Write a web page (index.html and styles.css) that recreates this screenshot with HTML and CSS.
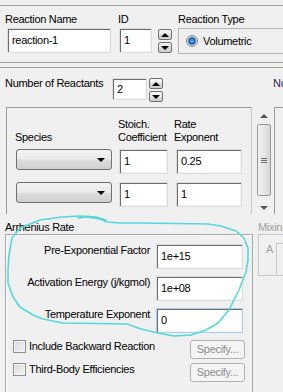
FILE: index.html
```html
<!DOCTYPE html>
<html lang="en">
<head>
    <meta charset="UTF-8">
    <title>Reaction</title>
    <link rel="stylesheet" href="styles.css">
</head>
<body>
    <div class="top-rule"></div>
    <div class="head-row">
        <div class="field name-field">
            <div class="label">Reaction Name</div>
            <div class="edit name-edit">reaction-1</div>
        </div>
        <div class="field id-field">
            <div class="label">ID</div>
            <div class="with-spin">
                <div class="edit id-edit">1</div>
                <div class="spin">
                    <div class="spin-btn up"></div>
                    <div class="spin-btn down"></div>
                </div>
            </div>
        </div>
        <div class="field type-field">
            <div class="label">Reaction Type</div>
            <div class="type-box"><span class="radio"></span>Volumetric</div>
        </div>
    </div>
    <div class="rule rule-a"></div>
    <div class="rule rule-b"></div>

    <div class="mid">
        <div class="reactants">
            <div class="count-row">
                <div class="label count-label">Number of Reactants</div>
                <div class="edit count-edit">2</div>
                <div class="spin small">
                    <div class="spin-btn up"></div>
                    <div class="spin-btn down"></div>
                </div>
            </div>
            <div class="table-wrap">
                <div class="table-box">
                    <div class="grid">
                        <div class="th species">Species</div>
                        <div class="th stoich">Stoich.<br>Coefficient</div>
                        <div class="th rate">Rate<br>Exponent</div>

                        <div class="combo"></div>
                        <div class="edit cell">1</div>
                        <div class="edit cell rate-cell">0.25</div>

                        <div class="combo"></div>
                        <div class="edit cell">1</div>
                        <div class="edit cell rate-cell">1</div>
                    </div>
                </div>
                <div class="vscroll">
                    <div class="arrow-up"></div>
                    <div class="thumb"><span></span><span></span><span></span></div>
                    <div class="arrow-down"></div>
                </div>
            </div>
        </div>
        <div class="products">
            <div class="label nu">Number of Products</div>
            <div class="products-box"></div>
        </div>
    </div>

    <div class="lower">
        <div class="arrhenius">
            <div class="label">Arrhenius Rate</div>
            <div class="group">
                <div class="param">
                    <div class="param-label">Pre-Exponential Factor</div>
                    <div class="edit param-edit">1e+15</div>
                </div>
                <div class="param">
                    <div class="param-label">Activation Energy (j/kgmol)</div>
                    <div class="edit param-edit">1e+08</div>
                </div>
                <div class="param">
                    <div class="param-label">Temperature Exponent</div>
                    <div class="edit param-edit focused">0</div>
                </div>
                <div class="check-row">
                    <span class="check"></span>
                    <span class="check-text">Include Backward Reaction</span>
                    <div class="btn-disabled">Specify...</div>
                </div>
                <div class="check-row">
                    <span class="check"></span>
                    <span class="check-text">Third-Body Efficiencies</span>
                    <div class="btn-disabled">Specify...</div>
                </div>
            </div>
        </div>
        <div class="mixing">
            <div class="label muted">Mixing Rule</div>
            <div class="mix-group">
                <span class="muted">A</span>
                <div class="mix-edit"></div>
            </div>
        </div>
    </div>

    <svg class="scribble" width="283" height="392" viewBox="0 0 283 392">
        <path d="M78 218 L87 217 L100 219 L107 222 L120 223 L142 223 L208 224 L221 226 L236 231 L244 238 L248 248 L248 260 L246 272 L239 290 L229 310 L218 323 L206 330 L191 335 L174 336 L158 333 L141 329 L127 324 L63 323 L43 319 L33 315 L20 307 L13 297 L8 283 L8 270 L9 255 L12 238 L20 228 L40 220 L62 217 L80 216 L96 217 L106 220"/>
    </svg>
</body>
</html>
```

FILE: styles.css
```css
* {
    box-sizing: border-box;
}
body {
    margin: 0;
    width: 283px;
    height: 392px;
    overflow: hidden;
    position: relative;
    background: #f0f0f0;
    font-family: "Liberation Sans", Arial, sans-serif;
    font-size: 11px;
    line-height: 13px;
    letter-spacing: -0.3px;
    color: #000;
}
.top-rule {
    height: 6px;
    border-bottom: 1px solid #a0a0a0;
}
.label {
    white-space: nowrap;
}
.muted {
    color: #a0a0a0;
}

/* text boxes */
.edit {
    height: 25px;
    background: #fff;
    border: 1px solid #dcdcdc;
    box-shadow: inset 1px 1px 0 #6d6d6d, inset -1px -1px 0 #f4f4f4;
    padding: 5px 0 0 4px;
    white-space: nowrap;
    overflow: hidden;
}
.edit.focused {
    border-color: #a9cfee;
}

/* header row */
.head-row {
    display: flex;
    padding: 7px 0 0 5px;
}
.field .label {
    margin-bottom: 2px;
}
.name-field {
    width: 106px;
}
.name-edit {
    margin-left: 2px;
    width: 104px;
}
.id-field {
    margin-left: 7px;
}
.with-spin {
    display: flex;
    align-items: flex-start;
}
.id-edit {
    margin-left: 1px;
    width: 33px;
}
.spin {
    margin: 1px 0 0 6px;
    display: flex;
    flex-direction: column;
    gap: 2px;
}
.spin-btn {
    width: 14px;
    height: 11px;
    border: 1px solid #707070;
    border-radius: 2px;
    background: linear-gradient(#f4f4f4, #ebebeb 50%, #dcdcdc 50%, #cfcfcf);
    display: flex;
    align-items: center;
    justify-content: center;
}
.spin-btn::before {
    content: "";
    border-left: 4px solid transparent;
    border-right: 4px solid transparent;
}
.spin-btn.up::before {
    border-bottom: 4px solid #000;
}
.spin-btn.down::before {
    border-top: 4px solid #000;
}
.type-field {
    margin-left: 6px;
}
.type-box {
    width: 120px;
    height: 26px;
    margin-top: 1px;
    border: 1px solid #b4b4b4;
    border-right: none;
    display: flex;
    align-items: center;
    padding-left: 7px;
    gap: 5px;
}
.radio {
    width: 12px;
    height: 12px;
    border-radius: 50%;
    border: 1px solid #8a8a8a;
    background: radial-gradient(circle, #4d9be0 0 1.5px, #0f4c94 3px, #8fb9e3 4px, #eaeaea 5px);
}

.rule {
    border-top: 1px solid #a0a0a0;
}
.rule-a {
    margin-top: 8px;
}
.rule-b {
    margin-top: 4px;
}

/* reactants */
.mid {
    display: flex;
}
.reactants {
    width: 272px;
    flex: none;
}
.count-row {
    display: flex;
    align-items: flex-start;
    padding: 10px 0 0 5px;
}
.count-label {
    width: 107px;
    margin-top: -1px;
}
.count-edit {
    width: 35px;
    height: 22px;
    padding-top: 4px;
}
.spin.small {
    margin: 0 0 0 2px;
}
.table-wrap {
    display: flex;
    margin-top: 5px;
    height: 107px;
}
.table-box {
    margin-left: 6px;
    width: 246px;
    border: 1px solid #9a9a9a;
    border-right-color: #c8c8c8;
    border-bottom: none;
    padding: 10px 0 0 9px;
}
.grid {
    display: grid;
    grid-template-columns: 103px 57px 66px;
    row-gap: 8px;
}
.th {
    align-self: end;
    margin-left: -1px;
    margin-bottom: -3px;
}
.th.rate {
    margin-left: -2px;
}
.combo {
    width: 96px;
    height: 21px;
    border: 1px solid #707070;
    border-radius: 3px;
    background: linear-gradient(#f3f3f3, #ebebeb 45%, #dddddd 55%, #cfcfcf);
    position: relative;
}
.combo::after {
    content: "";
    position: absolute;
    right: 6px;
    top: 8px;
    border-left: 4px solid transparent;
    border-right: 4px solid transparent;
    border-top: 4px solid #000;
}
.cell {
    width: 49px;
}
.rate-cell {
    width: 66px;
}
.vscroll {
    margin-left: 4px;
    width: 15px;
    display: flex;
    flex-direction: column;
    align-items: center;
    padding-top: 7px;
}
.arrow-up,
.arrow-down {
    border-left: 4px solid transparent;
    border-right: 4px solid transparent;
}
.arrow-up {
    border-bottom: 4px solid #555;
}
.arrow-down {
    border-top: 4px solid #555;
    margin-top: 10px;
}
.thumb {
    margin-top: 6px;
    width: 14px;
    height: 72px;
    border: 1px solid #9a9a9a;
    border-radius: 2px;
    background: linear-gradient(90deg, #f2f2f2, #e6e6e6 50%, #d6d6d6);
    display: flex;
    flex-direction: column;
    align-items: center;
    justify-content: center;
    gap: 1px;
}
.thumb span {
    width: 6px;
    height: 1px;
    background: #6d6d6d;
}
.products {
    flex: 1;
    min-width: 0;
    overflow: hidden;
    padding-top: 10px;
}
.nu {
    padding-left: 1px;
    color: #1b2560;
    margin-top: -1px;
}
.products-box {
    margin: 17px 0 0 2px;
    height: 107px;
    border: 1px solid #9a9a9a;
    border-right: none;
    border-bottom: none;
}

/* arrhenius */
.lower {
    display: flex;
    margin-top: 7px;
}
.arrhenius {
    width: 253px;
    flex: none;
    padding-left: 5px;
}
.group {
    width: 248px;
    height: 200px;
    border: 1px solid #a8a8a8;
    border-bottom: none;
    box-shadow: inset 1px 1px 0 #fff;
    padding-top: 9px;
}
.param {
    display: flex;
    align-items: flex-start;
    margin-bottom: 7px;
}
.param-label {
    width: 144px;
    text-align: right;
    white-space: nowrap;
}
.param-edit {
    margin-left: 6px;
    width: 87px;
}
.check-row {
    display: flex;
    align-items: flex-start;
    padding-left: 7px;
    height: 19px;
    margin-top: 3px;
    margin-bottom: 4px;
}
.check {
    width: 13px;
    height: 13px;
    border: 1px solid #8e8f8f;
    background: linear-gradient(135deg, #d8d8d8, #f4f4f4);
    box-shadow: inset 0 0 0 1px #f4f4f4;
    flex: none;
}
.check-text {
    margin: 0 0 0 3px;
    white-space: nowrap;
}
.btn-disabled {
    margin: 0 7px 0 auto;
    width: 55px;
    height: 19px;
    border: 1px solid #adb2b5;
    border-radius: 3px;
    background: #f4f4f4;
    color: #8b8d92;
    text-align: center;
    padding-top: 2px;
}
.mixing {
    margin-left: 5px;
    flex: 1;
    min-width: 0;
    overflow: hidden;
}
.mix-group {
    height: 42px;
    border: 1px solid #c8c8c8;
    border-right: none;
    display: flex;
    align-items: flex-start;
    padding: 8px 0 0 7px;
}
.mix-edit {
    margin-left: 3px;
    flex: 1;
    height: 33px;
    border: 1px solid #c8c8c8;
    border-right: none;
}

.scribble {
    position: absolute;
    left: 0;
    top: 0;
    pointer-events: none;
}
.scribble path {
    fill: none;
    stroke: #55d8db;
    stroke-width: 1.6;
    stroke-linejoin: round;
    stroke-linecap: round;
}
```
